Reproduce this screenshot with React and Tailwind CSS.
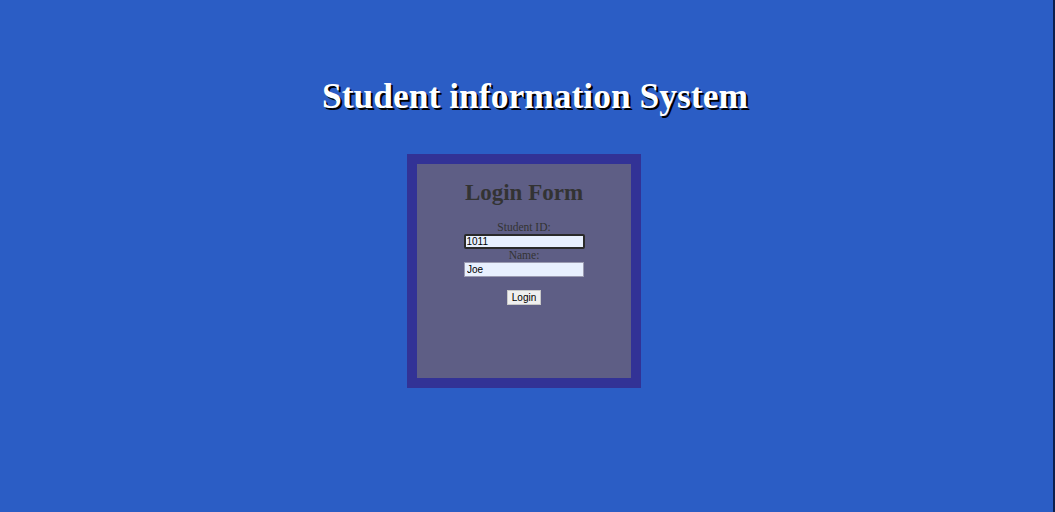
export default function App() {
  return (
    <div className="flex h-[512px] w-[1055px] overflow-hidden bg-[#2b5dc5]">
      <div className="flex flex-1 flex-col items-center">
        <div className="mt-[74px] h-[44px] w-full pl-[17px] text-center">
          <h1
            className="text-[35.5px] font-bold leading-[44px] text-white [text-shadow:2px_2px_0_#000]"
            style={{ fontFamily: '"Liberation Serif", "Times New Roman", serif' }}
          >
            Student information System
          </h1>
        </div>
        <div className="mt-[36px] w-full flex justify-center pr-[5px]">
          <div className="h-[234px] w-[234px] border-[10px] border-[#323296] bg-[#5e5e85]">
            <div
              className="flex flex-col items-center pt-[15px] text-[#333333]"
              style={{ fontFamily: '"Liberation Serif", "Times New Roman", serif' }}
            >
              <h2 className="h-[28px] text-[23px] font-bold leading-[28px]">Login Form</h2>
              <label className="mt-[14px] h-[13px] text-[11.5px] leading-[13px]">Student ID:</label>
              <input
                className="h-[15px] w-[121px] rounded-[2px] border-2 border-[#2a2a2a] bg-[#e8f0fe] px-[1px] text-[10px] leading-[11px] text-black outline-none"
                style={{ fontFamily: '"Liberation Sans", Arial, sans-serif' }}
                defaultValue="1011"
              />
              <label className="h-[13px] text-[11.5px] leading-[13px]">Name:</label>
              <input
                className="h-[15px] w-[120px] border border-[#9a9ab0] bg-[#e8f0fe] px-[2px] text-[10px] leading-[11px] text-black outline-none"
                style={{ fontFamily: '"Liberation Sans", Arial, sans-serif' }}
                defaultValue="Joe"
              />
              <button
                className="mt-[13px] h-[15px] w-[34px] border border-[#c8c8c8] bg-[#efefef] text-[10px] leading-[12px] text-black"
                style={{ fontFamily: '"Liberation Sans", Arial, sans-serif' }}
              >
                Login
              </button>
            </div>
          </div>
        </div>
      </div>
      <div className="w-[2px] bg-[#0b1f4d]" />
    </div>
  );
}
